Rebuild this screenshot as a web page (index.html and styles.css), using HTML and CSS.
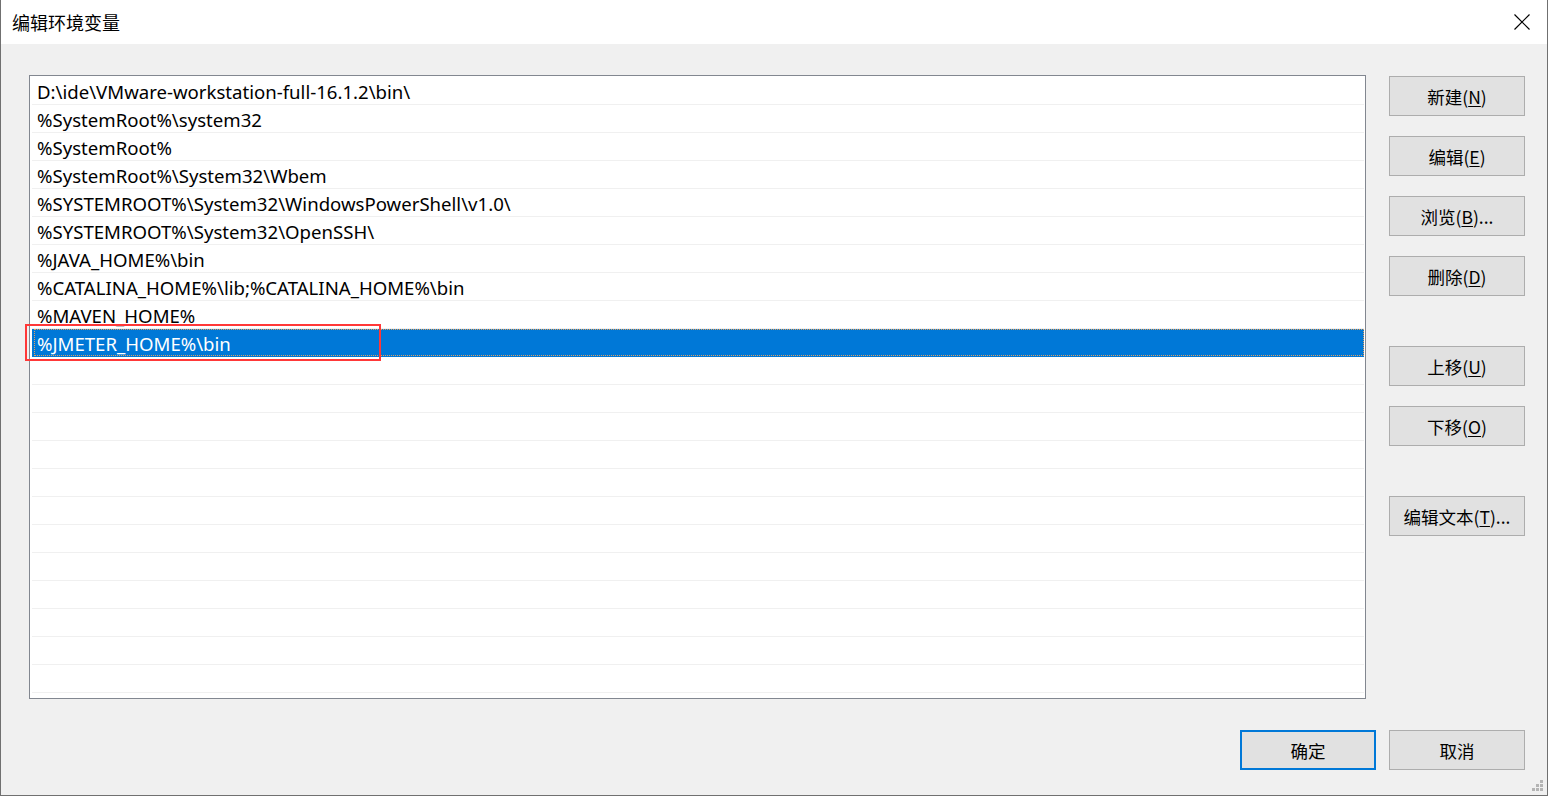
FILE: index.html
```html
<!DOCTYPE html>
<html lang="zh-CN">
<head>
<meta charset="utf-8">
<title>编辑环境变量</title>
<link rel="stylesheet" href="styles.css">
</head>
<body>
<div class="window">
  <div class="titlebar">
    <span class="title">编辑环境变量</span>
    <span class="close">
      <svg width="16" height="16" viewBox="0 0 16 16"><path d="M0.5 0.5 L15.5 15.5 M15.5 0.5 L0.5 15.5" stroke="#000" stroke-width="1.2" fill="none"/></svg>
    </span>
  </div>
  <div class="content">
    <div class="main">
      <div class="listwrap">
        <div class="list">
          <div class="row">D:\ide\VMware-workstation-full-16.1.2\bin\</div>
          <div class="row">%SystemRoot%\system32</div>
          <div class="row">%SystemRoot%</div>
          <div class="row">%SystemRoot%\System32\Wbem</div>
          <div class="row">%SYSTEMROOT%\System32\WindowsPowerShell\v1.0\</div>
          <div class="row">%SYSTEMROOT%\System32\OpenSSH\</div>
          <div class="row">%JAVA_HOME%\bin</div>
          <div class="row">%CATALINA_HOME%\lib;%CATALINA_HOME%\bin</div>
          <div class="row">%MAVEN_HOME%</div>
          <div class="row selected"><span class="focus">%JMETER_HOME%\bin</span></div>
          <div class="row"></div>
          <div class="row"></div>
          <div class="row"></div>
          <div class="row"></div>
          <div class="row"></div>
          <div class="row"></div>
          <div class="row"></div>
          <div class="row"></div>
          <div class="row"></div>
          <div class="row"></div>
          <div class="row"></div>
          <div class="row"></div>
          <div class="row"></div>
        </div>
        <div class="highlight"></div>
      </div>
      <div class="sidebuttons">
        <button class="btn">新建(<u>N</u>)</button>
        <button class="btn">编辑(<u>E</u>)</button>
        <button class="btn">浏览(<u>B</u>)...</button>
        <button class="btn">删除(<u>D</u>)</button>
        <button class="btn group">上移(<u>U</u>)</button>
        <button class="btn">下移(<u>O</u>)</button>
        <button class="btn group">编辑文本(<u>T</u>)...</button>
      </div>
    </div>
    <div class="footer">
      <button class="btn default">确定</button>
      <button class="btn">取消</button>
    </div>
  </div>
  <div class="grip">
    <svg width="12" height="12" viewBox="0 0 12 12" fill="#b4b4b4">
      <rect x="8" y="0" width="3" height="3"/>
      <rect x="4" y="4" width="3" height="3"/><rect x="8" y="4" width="3" height="3"/>
      <rect x="0" y="8" width="3" height="3"/><rect x="4" y="8" width="3" height="3"/><rect x="8" y="8" width="3" height="3"/>
    </svg>
  </div>
</div>
</body>
</html>
```
FILE: styles.css
```css
* { box-sizing: border-box; }
html, body { margin: 0; padding: 0; }
body {
  font-family: "Noto Sans", "Noto Sans CJK SC", sans-serif;
  color: #000;
  background: #f0f0f0;
}
.window {
  position: relative;
  width: 1548px;
  height: 796px;
  background: #f0f0f0;
  border-left: 1px solid #707070;
  border-right: 1px solid #707070;
  border-bottom: 1px solid #707070;
  display: flex;
  flex-direction: column;
  overflow: hidden;
}
.titlebar {
  height: 44px;
  background: #fff;
  display: flex;
  align-items: center;
  justify-content: space-between;
  padding: 0 17px 0 11px;
  flex: none;
}
.title {
  font-family: "Noto Sans CJK SC", sans-serif;
  font-size: 18px;
  line-height: 22px;
}
.close { display: flex; }
.content {
  flex: 1;
  display: flex;
  flex-direction: column;
  padding: 31px 22px 0 28px;
}
.main {
  display: flex;
  gap: 23px;
}
.listwrap {
  position: relative;
  width: 1337px;
  height: 624px;
  flex: none;
}
.list {
  width: 100%;
  height: 100%;
  background: #fff;
  border: 1px solid #828790;
  overflow: hidden;
  padding: 1px 1px 0 2px;
}
.row {
  height: 28px;
  border-bottom: 1px solid #f0f0f0;
  font-size: 18.6px;
  line-height: 29px;
  padding-left: 5px;
  white-space: nowrap;
}
.row.selected {
  background: #0078d7;
  color: #fff;
  padding-left: 2px;
  border-bottom-color: #0078d7;
}
.focus {
  display: block;
  height: 27px;
  padding-left: 3px;
  outline: 1px dotted #e0a060;
  outline-offset: -1px;
  width: 1330px;
}
.highlight {
  position: absolute;
  left: -4px;
  top: 249px;
  width: 356px;
  height: 37px;
  border: 2px solid #ff3838;
}
.sidebuttons {
  display: flex;
  flex-direction: column;
  gap: 20px;
  padding-top: 1px;
}
.btn {
  width: 136px;
  height: 40px;
  background: #e1e1e1;
  border: 1px solid #adadad;
  font-family: "Noto Sans CJK SC", sans-serif;
  font-size: 17.5px;
  color: #000;
  padding: 0;
  display: flex;
  align-items: center;
  justify-content: center;
}
.btn u { text-underline-offset: 2px; }
.btn.group { margin-top: 30px; }
.footer {
  display: flex;
  justify-content: flex-end;
  gap: 13px;
  margin-top: 31px;
}
.btn.default {
  border: 2px solid #0078d7;
}
.grip {
  position: absolute;
  right: 3px;
  bottom: 3px;
  display: flex;
}
```
